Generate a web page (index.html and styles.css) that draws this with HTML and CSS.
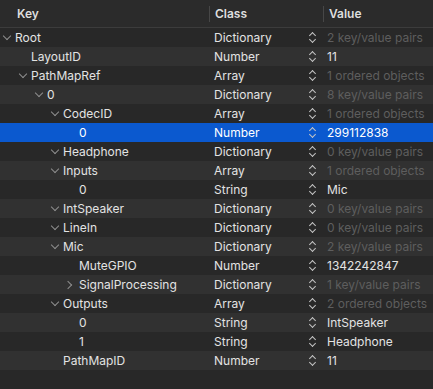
FILE: index.html
```html
<!DOCTYPE html>
<html lang="en">
<head>
  <meta charset="UTF-8" />
  <title>Plist Editor</title>
  <link rel="stylesheet" href="styles.css">
</head>
<body>
  <div class="plist">
    <div class="head">
      <div class="hcell key-h">Key</div>
      <div class="hcell sep">Class</div>
      <div class="hcell sep val-h">Value</div>
    </div>

    <div class="row">
      <div class="key lvl0"><span class="tw down"></span>Root</div>
      <div class="cls">Dictionary<span class="ud"></span></div>
      <div class="val dim">2 key/value pairs</div>
    </div>
    <div class="row">
      <div class="key lvl1"><span class="tw"></span>LayoutID</div>
      <div class="cls">Number<span class="ud"></span></div>
      <div class="val">11</div>
    </div>
    <div class="row">
      <div class="key lvl1"><span class="tw down"></span>PathMapRef</div>
      <div class="cls">Array<span class="ud"></span></div>
      <div class="val dim">1 ordered objects</div>
    </div>
    <div class="row">
      <div class="key lvl2"><span class="tw down"></span>0</div>
      <div class="cls">Dictionary<span class="ud"></span></div>
      <div class="val dim">8 key/value pairs</div>
    </div>
    <div class="row">
      <div class="key lvl3"><span class="tw down"></span>CodecID</div>
      <div class="cls">Array<span class="ud"></span></div>
      <div class="val dim">1 ordered objects</div>
    </div>
    <div class="row selected">
      <div class="key lvl4"><span class="tw"></span>0</div>
      <div class="cls">Number<span class="ud"></span></div>
      <div class="val">299112838</div>
    </div>
    <div class="row">
      <div class="key lvl3"><span class="tw down"></span>Headphone</div>
      <div class="cls">Dictionary<span class="ud"></span></div>
      <div class="val dim">0 key/value pairs</div>
    </div>
    <div class="row">
      <div class="key lvl3"><span class="tw down"></span>Inputs</div>
      <div class="cls">Array<span class="ud"></span></div>
      <div class="val dim">1 ordered objects</div>
    </div>
    <div class="row">
      <div class="key lvl4"><span class="tw"></span>0</div>
      <div class="cls">String<span class="ud"></span></div>
      <div class="val">Mic</div>
    </div>
    <div class="row">
      <div class="key lvl3"><span class="tw down"></span>IntSpeaker</div>
      <div class="cls">Dictionary<span class="ud"></span></div>
      <div class="val dim">0 key/value pairs</div>
    </div>
    <div class="row">
      <div class="key lvl3"><span class="tw down"></span>LineIn</div>
      <div class="cls">Dictionary<span class="ud"></span></div>
      <div class="val dim">0 key/value pairs</div>
    </div>
    <div class="row">
      <div class="key lvl3"><span class="tw down"></span>Mic</div>
      <div class="cls">Dictionary<span class="ud"></span></div>
      <div class="val dim">2 key/value pairs</div>
    </div>
    <div class="row">
      <div class="key lvl4"><span class="tw"></span>MuteGPIO</div>
      <div class="cls">Number<span class="ud"></span></div>
      <div class="val">1342242847</div>
    </div>
    <div class="row">
      <div class="key lvl4"><span class="tw right"></span>SignalProcessing</div>
      <div class="cls">Dictionary<span class="ud"></span></div>
      <div class="val dim">1 key/value pairs</div>
    </div>
    <div class="row">
      <div class="key lvl3"><span class="tw down"></span>Outputs</div>
      <div class="cls">Array<span class="ud"></span></div>
      <div class="val dim">2 ordered objects</div>
    </div>
    <div class="row">
      <div class="key lvl4"><span class="tw"></span>0</div>
      <div class="cls">String<span class="ud"></span></div>
      <div class="val">IntSpeaker</div>
    </div>
    <div class="row">
      <div class="key lvl4"><span class="tw"></span>1</div>
      <div class="cls">String<span class="ud"></span></div>
      <div class="val">Headphone</div>
    </div>
    <div class="row">
      <div class="key lvl3"><span class="tw"></span>PathMapID</div>
      <div class="cls">Number<span class="ud"></span></div>
      <div class="val">11</div>
    </div>
  </div>
</body>
</html>
```

FILE: styles.css
```css
* {
  margin: 0;
  padding: 0;
  box-sizing: border-box;
}

body {
  font-family: Inter, 'Liberation Sans', sans-serif;
  font-size: 12px;
  background-color: #282828;
  color: #e3e3e3;
  width: 433px;
  height: 389px;
  overflow: hidden;
}

.head {
  display: grid;
  grid-template-columns: 209px 114px 1fr;
  height: 28px;
  background-color: #2b2b2b;
  border-bottom: 1px solid #3c3c3c;
  align-items: center;
  font-weight: 600;
  color: #dedede;
}

.hcell {
  height: 16px;
  line-height: 16px;
  padding-left: 5px;
}

.key-h {
  padding-left: 17px;
}

.sep {
  border-left: 1px solid #474747;
}

.val-h {
  padding-left: 5px;
}

.row {
  display: grid;
  grid-template-columns: 209px 114px 1fr;
  height: 19px;
  line-height: 19px;
  background-color: #282828;
}

.row:nth-of-type(odd) {
  background-color: #313131;
}

.row.selected {
  background-color: #0b59cf;
  color: #ffffff;
}

.key {
  display: flex;
  align-items: center;
  white-space: nowrap;
}

.lvl0 { padding-left: 3px; }
.lvl1 { padding-left: 19px; }
.lvl2 { padding-left: 35px; }
.lvl3 { padding-left: 51px; }
.lvl4 { padding-left: 67px; }

.tw {
  width: 12px;
  height: 19px;
  flex: none;
  position: relative;
}

/* disclosure chevrons drawn with borders */
.tw.down::before {
  content: "";
  position: absolute;
  left: 1px;
  top: 5px;
  width: 5px;
  height: 5px;
  border-right: 1px solid #8e8e8e;
  border-bottom: 1px solid #8e8e8e;
  transform: rotate(45deg);
}

.tw.right::before {
  content: "";
  position: absolute;
  left: -2px;
  top: 7px;
  width: 5px;
  height: 5px;
  border-right: 1px solid #8e8e8e;
  border-bottom: 1px solid #8e8e8e;
  transform: rotate(-45deg);
}

.cls {
  display: flex;
  justify-content: space-between;
  align-items: center;
  padding-left: 5px;
  padding-right: 8px;
}

/* up/down stepper */
.ud {
  width: 6px;
  height: 11px;
  position: relative;
}

.ud::before,
.ud::after {
  content: "";
  position: absolute;
  left: 1px;
  width: 4px;
  height: 4px;
  border-left: 1px solid #c4c4c4;
  border-top: 1px solid #c4c4c4;
}

.ud::before {
  top: 1px;
  transform: rotate(45deg);
}

.ud::after {
  bottom: 1px;
  transform: rotate(-135deg);
}

.val {
  padding-left: 4px;
  white-space: nowrap;
  overflow: hidden;
}

.val.dim {
  color: #5e5e5e;
}
```
